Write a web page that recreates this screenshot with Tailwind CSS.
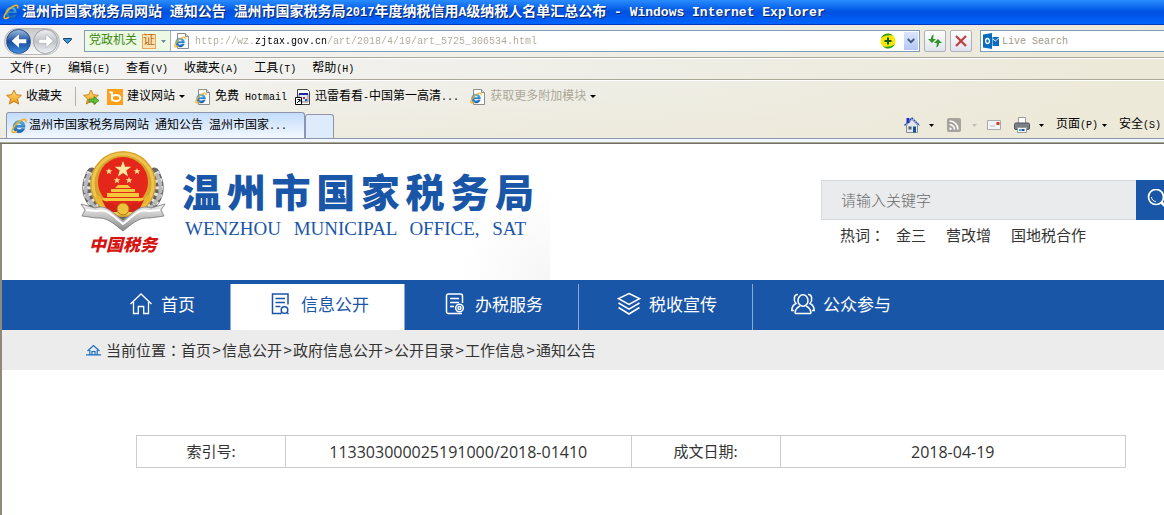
<!DOCTYPE html>
<html lang="zh-CN">
<head>
<meta charset="utf-8">
<title>温州市国家税务局网站</title>
<script src="https://cdn.jsdelivr.net/npm/@tailwindcss/browser@4"></script>
</head>
<body class="min-h-screen overflow-x-hidden bg-white font-['Noto_Sans_CJK_SC',sans-serif] text-[15px] text-[#333]">
<svg class="absolute size-0" aria-hidden="true">
  <defs>
    <linearGradient id="ieBlue" x1="0" y1="0" x2="0" y2="1"><stop offset="0" stop-color="#4fbcf0"/><stop offset="1" stop-color="#1160b8"/></linearGradient>
    <linearGradient id="gold" x1="0" y1="0" x2="0" y2="1"><stop offset="0" stop-color="#ffe680"/><stop offset="1" stop-color="#f0930c"/></linearGradient>
    <linearGradient id="silver" x1="0" y1="0" x2="0" y2="1"><stop offset="0" stop-color="#f2f2f2"/><stop offset="1" stop-color="#8b8b8b"/></linearGradient>
    <symbol id="ie" viewBox="0 0 16 16">
      <path d="M14 9.300H5.400c.2 1.600 1.300 2.500 2.900 2.500 1.100 0 1.900-.4 2.400-1.200h3c-.7 2.700-2.800 4.200-5.600 4.200-3.600 0-5.900-2.400-5.900-6 0-3.500 2.400-6.100 5.900-6.100 3.800 0 6 2.700 5.900 6.600zM5.500 7.200h5.200C10.500 5.800 9.600 5 8.200 5 6.700 5 5.800 5.800 5.500 7.200z" fill="url(#ieBlue)" stroke="#0d4f9c" stroke-width=".4"/>
      <path d="M14.600 4.500c.8-2.600-.4-3.700-2.600-2.900C8.500 2.900 3.700 7 1.900 10.500.6 13 .9 14.900 2.900 14.500c.9-.2 2-.7 3-1.400" fill="none" stroke="#f5b120" stroke-width="1.600"/>
    </symbol>
    <symbol id="iepage" viewBox="0 0 16 16">
      <path d="M3.500.5h8l3 3v12h-11z" fill="#fff" stroke="#8d8d8d"/><path d="M11.500.5v3h3" fill="#ddd" stroke="#8d8d8d"/>
      <use href="#ie" x="0" y="3" width="12" height="12"/>
    </symbol>
    <symbol id="star" viewBox="0 0 16 16"><path d="M8 1l2.200 4.700 5.200.6-3.900 3.500 1.100 5.200L8 12.400 3.400 15l1.100-5.200L.6 6.300l5.200-.6z" fill="url(#gold)" stroke="#c47a12" stroke-width=".9"/></symbol>
  </defs>
</svg>

<header class="font-['Liberation_Mono','Noto_Sans_CJK_SC',monospace] text-xs text-black">
  <!-- Title bar -->
  <div class="flex h-[25px] items-center gap-[3px] overflow-hidden whitespace-nowrap bg-linear-to-b from-[#2a8cff] via-[#0050e0] to-[#0066ff] pl-[3px] border-b border-[#0038c0]">
    <svg class="size-4 shrink-0"><use href="#ie"/></svg>
    <h1 class="text-sm font-bold text-white [text-shadow:1px_1px_0_#0a246a]">温州市国家税务局网站<span class="text-[13px]"> </span>通知公告<span class="text-[13px]"> </span>温州市国家税务局<span class="text-xs">2017</span>年度纳税信用<span class="text-[13px]">A</span>级纳税人名单汇总公布<span class="text-[13px]"> - Windows Internet Explorer</span></h1>
  </div>

  <div class="bg-linear-to-r from-[#f4f4f4] via-[#efeee7] to-[#ece9d8]">
    <!-- Address row -->
    <div class="flex h-[33px] items-center border-b border-[#aca899]">
      <div class="ml-1 flex h-[27px] w-14 shrink-0 items-center justify-between rounded-full border border-[#b8b8b8] bg-linear-to-b from-[#c8c8c8] to-[#f8f8f8] px-px">
        <button aria-label="后退" class="grid size-[25px] place-items-center rounded-full border border-[#28508c] bg-linear-to-b from-[#9ab8dc] via-[#1c4c9c] to-[#3f8fe0]"><svg class="size-[18px]" viewBox="0 0 16 16"><path d="M8 2L1.500 8 8 14v-4h6.500V6.500H8z" fill="#fff"/></svg></button>
        <button aria-label="前进" class="grid size-[25px] place-items-center rounded-full border border-[#a0a4aa] bg-linear-to-b from-[#eceef0] via-[#bfc3c8] to-[#f0f2f4]"><svg class="size-[18px]" viewBox="0 0 16 16"><path d="M8 2l6.500 6L8 14v-4H1.500V6.500H8z" fill="#fff" stroke="#a4a8ac" stroke-width=".5"/></svg></button>
      </div>
      <button aria-label="最近的页面" class="ml-[3px] shrink-0"><svg class="h-[6px] w-[9px]" viewBox="0 0 9 6"><path d="M.5.5h8v1L4.500 5.500.5 1.500z" fill="#3f98c4" stroke="#173f74"/></svg></button>
      <div class="ml-3 flex h-[22px] min-w-0 flex-1 items-center border border-[#7f9db9] bg-white">
        <button class="flex h-full shrink-0 items-center gap-[5px] border-r border-[#9fb0c4] bg-[#eef9e4] pl-1 pr-1 text-[#3a8a12]">党政机关<span class="border border-[#eda653] bg-[#fbe3b8] text-xs leading-[13px] text-[#b86a10]">证</span><svg class="h-[3px] w-[5px]" viewBox="0 0 5 3"><path d="M0 0h5L2.500 3z" fill="#6b8799"/></svg></button>
        <svg class="mr-[5px] ml-[3px] size-4 shrink-0"><use href="#iepage"/></svg>
        <input aria-label="地址" class="h-5 min-w-0 flex-1 bg-[linear-gradient(90deg,#aca899_0_60px,#000_60px_132px,#aca899_132px)] bg-clip-text text-[10px] text-transparent outline-none" value="http://wz.zjtax.gov.cn/art/2018/4/19/art_5725_306534.html">
        <button aria-label="兼容性检查" class="shrink-0"><svg class="size-4" viewBox="0 0 16 16"><circle cx="8" cy="8" r="7.500" fill="#f8e800"/><path d="M1 5a7.500 7.500 0 0 1 12-2.500C9 2 5 2 1 5zM15 11A7.500 7.500 0 0 1 3 13.500C7 14 11 14 15 11z" fill="#2c9c1c"/><path d="M8 4.500v7M4.500 8h7" stroke="#0b5a18" stroke-width="2"/></svg></button>
        <button aria-label="地址列表" class="mr-px ml-2 grid h-[18px] w-[14px] shrink-0 place-items-center bg-linear-to-b from-[#dce6fc] to-[#b4c8f4]"><svg class="h-[6px] w-2" viewBox="0 0 8 6"><path d="M.8 1L4 4.200 7.200 1" fill="none" stroke="#44547a" stroke-width="1.800"/></svg></button>
      </div>
      <button aria-label="刷新" class="ml-1 grid size-[22px] shrink-0 place-items-center rounded-[2px] border border-[#aeb2b8] bg-linear-to-b from-white to-[#dfe3ee]"><svg class="size-4" viewBox="0 0 16 16"><path d="M7 1.500C4.500 2 4 4 4 6H1l4 4 4-4H6.200c0-2 .1-3 .8-4.500zM9 14.500c2.500-.5 3-2.500 3-4.500h3l-4-4-4 4h2.800c0 2-.1 3-.8 4.500z" fill="#2f9426"/></svg></button>
      <button aria-label="停止" class="ml-1 grid size-[22px] shrink-0 place-items-center rounded-[2px] border border-[#aeb2b8] bg-linear-to-b from-white to-[#dfe3ee]"><svg class="size-4" viewBox="0 0 16 16"><path d="M3 3l10 10M13 3L3 13" stroke="#bf3f3c" stroke-width="2.200"/></svg></button>
      <div class="ml-2 flex h-[22px] w-[184px] shrink-0 items-center border border-r-0 border-[#7f9db9] bg-white pl-[2px]">
        <svg class="size-4 shrink-0" viewBox="0 0 16 16"><path d="M0 1.500L9 0v16L0 14.500zM9.500 4H16v9H9.500z" fill="#0a6cbd"/><ellipse cx="4.500" cy="8" rx="1.900" ry="2.500" fill="none" stroke="#fff" stroke-width="1.300"/><path d="M10 6l2.300 2L16 4.800" fill="none" stroke="#fff"/></svg>
        <input aria-label="搜索" placeholder="Live Search" class="ml-[3px] h-5 w-36 bg-transparent text-[10px] outline-none placeholder:text-[#9d9a8d]">
      </div>
    </div>
    <!-- Menu bar -->
    <nav class="flex h-[22px] items-center gap-4 whitespace-nowrap border-t border-t-white border-b border-b-[#aca899] pl-[10px] leading-5">
      <button>文件<span class="text-[10px]">(F)</span></button>
      <button>编辑<span class="text-[10px]">(E)</span></button>
      <button>查看<span class="text-[10px]">(V)</span></button>
      <button>收藏夹<span class="text-[10px]">(A)</span></button>
      <button>工具<span class="text-[10px]">(T)</span></button>
      <button>帮助<span class="text-[10px]">(H)</span></button>
    </nav>
    <div class="bg-linear-to-b from-transparent to-[#ece9d8]/70">
    <!-- Favorites bar -->
    <div class="flex h-8 items-center whitespace-nowrap border-t border-white pl-[6px]">
      <button class="flex items-center gap-1"><svg class="size-4"><use href="#star"/></svg>收藏夹</button>
      <span class="mr-[7px] ml-[13px] h-[19px] w-px bg-[#b5b2a4]"></span>
      <button aria-label="添加到收藏夹栏"><svg class="block size-4" viewBox="0 0 16 16"><use href="#star"/><path d="M6 10h5V7.500l5 4-5 4V13H6z" fill="#5cc43c" stroke="#2a7c1c" stroke-width=".7"/></svg></button>
      <button class="ml-2 flex items-center gap-1"><svg class="size-4" viewBox="0 0 16 16"><path d="M0 0h16v16H0z" fill="#ffa01c"/><path d="M2.500 3l2.500.8v7.700" fill="none" stroke="#fff" stroke-width="2"/><ellipse cx="9" cy="9" rx="4.300" ry="3" fill="none" stroke="#fff" stroke-width="2"/></svg>建议网站<svg class="h-[3px] w-[6px]" viewBox="0 0 6 3"><path d="M0 0h6L3 3z"/></svg></button>
      <button class="ml-[10px] flex items-center gap-1"><svg class="size-4"><use href="#iepage"/></svg><span>免费<span class="text-[10px]"> Hotmail</span></span></button>
      <button class="ml-2 flex items-center gap-1"><svg class="size-4" viewBox="0 0 16 16"><path d="M2.500.5h10l2 2v13h-12z" fill="#fff" stroke="#444"/><path d="M4 5h9v8H4z" fill="#dfe8ff" stroke="#666" stroke-width=".8"/><path d="M4 4h9v2H4z" fill="#1b2b9c"/><path d="M8 8h2v2H8z" fill="#e22"/><path d="M10 10h2v2h-2z" fill="#1a58d8"/><path d="M.5 8.500h6v7h-6z" fill="#fff" stroke="#000"/><path d="M2 14l3-3M2.500 10.500H5V13" fill="none" stroke="#000"/></svg><span>迅雷看看<span class="text-[10px]">-</span>中国第一高清<span class="text-[10px]">...</span></span></button>
      <button class="ml-[11px] flex items-center gap-1 text-[#aca899]"><svg class="size-4"><use href="#iepage"/></svg>获取更多附加模块<svg class="h-[3px] w-[6px]" viewBox="0 0 6 3"><path d="M0 0h6L3 3z" fill="#000"/></svg></button>
    </div>
    <!-- Tabs and command bar -->
    <div class="flex h-[27px] items-end border-b border-[#8c95ab] whitespace-nowrap">
      <button class="ml-[6px] flex h-[26px] w-[299px] shrink-0 items-center gap-[2px] rounded-t-[3px] border border-b-0 border-[#8c95ab] bg-linear-to-b from-[#c3dcfa] to-[#f3f8ff] pl-1"><svg class="size-4"><use href="#ie"/></svg><span>温州市国家税务局网站<span class="text-[10px]"> </span>通知公告<span class="text-[10px]"> </span>温州市国家<span class="text-[10px]">...</span></span></button>
      <button aria-label="新选项卡" class="h-[24px] w-[29px] shrink-0 rounded-t-[3px] border border-b-0 border-[#8c95ab] bg-[#deebfa]"></button>
      <div class="ml-auto flex h-[26px] w-[260px] shrink-0 items-center overflow-hidden">
        <button aria-label="主页" class="flex shrink-0 items-center gap-[9px]"><svg class="size-4" viewBox="0 0 16 16"><path d="M2.500 8v7.500h11V8L8 2.500z" fill="#e4e7ee" stroke="#8a8f99"/><path d="M2.500 1h3v5h-3z" fill="#1c2fc4"/><path d="M.5 8.500L8 1l7.500 7.500" fill="none" stroke="#2b50c8" stroke-width="1.400" stroke-dasharray="2 .6"/><path d="M9 9.500h3v6H9z" fill="#1c4f9c"/><path d="M4.500 9.500h3v3h-3z" fill="#555e70"/></svg><svg class="h-[3px] w-[5px]" viewBox="0 0 5 3"><path d="M0 0h5L2.500 3z"/></svg></button>
        <button aria-label="源" class="ml-3 flex shrink-0 items-center gap-[10px]"><svg class="size-4" viewBox="0 0 16 16"><rect x="1" y="1" width="14" height="14" rx="2" fill="#a5a39b"/><path d="M3.500 7.500a5 5 0 0 1 5 5M3.500 4a8.500 8.500 0 0 1 8.500 8.500" fill="none" stroke="#fff" stroke-width="1.600"/><circle cx="4.500" cy="11.700" r="1.200" fill="#fff"/></svg><svg class="h-[3px] w-[5px]" viewBox="0 0 5 3"><path d="M0 0h5L2.500 3z" fill="#c2bfb2"/></svg></button>
        <button aria-label="阅读邮件" class="ml-[9px] shrink-0"><svg class="block size-4" viewBox="0 0 16 16"><path d="M1.500 3.500h13v9h-13z" fill="#f4f4f4" stroke="#aaa"/><path d="M10.500 5h3v3h-3z" fill="#cf3a36"/><path d="M4 9h5" stroke="#bbb"/></svg></button>
        <button aria-label="打印" class="ml-3 flex shrink-0 items-center gap-[9px]"><svg class="size-4" viewBox="0 0 16 16"><path d="M4.500.5h7v6h-7z" fill="#fff" stroke="#999"/><rect x=".5" y="6" width="15" height="6.500" rx="1.500" fill="#7b7f86" stroke="#50545a"/><path d="M3.500 10.500h9v5h-9z" fill="#f4f6fa" stroke="#999"/><path d="M5 12h2v2H5z" fill="#28b4d4"/><path d="M7.500 12h3v2h-3z" fill="#2b4f9c"/></svg><svg class="h-[3px] w-[5px]" viewBox="0 0 5 3"><path d="M0 0h5L2.500 3z"/></svg></button>
        <button class="ml-3 flex shrink-0 items-center gap-1"><span>页面<span class="text-[10px]">(P)</span></span><svg class="h-[3px] w-[5px]" viewBox="0 0 5 3"><path d="M0 0h5L2.500 3z"/></svg></button>
        <button class="ml-3 shrink-0">安全<span class="text-[10px]">(S)</span></button>
      </div>
    </div>
    </div>
    <div class="h-[5px] border-b border-[#716f64] bg-[#f1f5fd] pt-[3px]"><div class="h-px bg-[#aca899]"></div></div>
  </div>
</header>

<div class="border-l-2 border-[#8d8a7c]">
  <!-- Masthead -->
  <div class="flex h-[136px] items-start overflow-hidden">
    <a href="#" class="flex h-full w-[548px] shrink-0 items-start bg-[radial-gradient(circle_at_100%_100%,#f6f6f6,#fff_90px)] pl-[78px]">
      <span class="flex w-[86px] flex-col items-center pt-[6px]">
        <svg class="h-[82px] w-[86px]" viewBox="0 0 86 82" aria-hidden="true">
          <g fill="none" stroke-linecap="round">
            <path d="M12 23C2 42 10 58 38 68M74 23c10 19 2 35-26 45" stroke="#666" stroke-width="11"/>
            <path d="M12 23C2 42 10 58 38 68M74 23c10 19 2 35-26 45" stroke="#e4e4e4" stroke-width="10" stroke-dasharray="3 4" stroke-linecap="butt"/>
            <path d="M9 25C0 43 8 57 35 68M77 25c9 18 1 32-25 43" stroke="#b9b9b9" stroke-width="4" stroke-dasharray="3 4"/>
          </g>
          <circle cx="43" cy="34" r="33" fill="#d9a32c"/>
          <circle cx="43" cy="34" r="30" fill="none" stroke="#ecc64e" stroke-width="3"/>
          <circle cx="43" cy="32" r="25" fill="#e5261a"/>
          <path d="M43 11l2.100 5.800h6.100l-4.900 3.700 1.800 6-5.100-3.600-5.100 3.600 1.800-6-4.900-3.700h6.100z" fill="#fbe9a0"/>
          <path id="smallStar" d="M29 18l.9 2.300h2.500l-2 1.500.8 2.400-2.200-1.500-2.200 1.500.8-2.400-2-1.500h2.500z" fill="#fbe08c"/>
          <use href="#smallStar" x="28"/><use href="#smallStar" x="8" y="9"/><use href="#smallStar" x="20" y="9"/>
          <path d="M35 38l3-3h10l3 3zM31 39h24v3H31zM27 43h32v4H27zM23 48h40v3H23z" fill="#f3c83c"/>
          <path d="M17 46c4 8 12 11 20 11M69 46c-4 8-12 11-20 11" fill="none" stroke="#e9b32e" stroke-width="4"/>
          <path d="M22 50l6 12h9l3-6zM64 50l-6 12h-9l-3-6z" fill="#d62015"/>
          <circle cx="43" cy="59" r="6" fill="#edc23c" stroke="#b07410"/>
          <path d="M1 54l14 4c12-4 17 5 28 12 11-7 16-16 28-12l14-4-4 6 3 6-14 2c-11-1-17 5-27 13-10-8-16-14-27-13L2 66l3-6z" fill="url(#silver)" stroke="#777" stroke-width=".8"/>
          <path d="M6 60l10 1c12-3 16 5 27 13 11-8 15-16 27-13l10-1" fill="none" stroke="#fff" stroke-width="2"/>
        </svg>
        <span class="text-[17px] font-black italic leading-6 text-[#d41512]">中国税务</span>
      </span>
      <span class="ml-4 flex w-[352px] flex-col pt-6 text-[#1a56a8]">
        <span class="text-[39px] font-black leading-11 [text-align-last:justify]">温州市国家税务局</span>
        <span class="mr-2 ml-[3px] mt-[5px] whitespace-nowrap font-['Liberation_Serif',serif] text-[19px] leading-6 [text-align-last:justify]">WENZHOU MUNICIPAL OFFICE, SAT</span>
      </span>
    </a>
    <div class="ml-auto w-[343px] shrink-0 pt-9">
      <form class="flex h-10">
        <input aria-label="请输入关键字" placeholder="请输入关键字" class="min-w-0 flex-1 border border-r-0 border-[#d9dadb] bg-[#e9ebed] pl-[19px] font-light outline-none placeholder:text-[#6a6a6a]">
        <button type="button" aria-label="搜索" class="w-7 shrink-0 overflow-hidden bg-[#1a56a8] pl-[11px]"><svg class="block h-[22px] w-[22px]" viewBox="0 0 22 22" fill="none" stroke="#fff"><circle cx="9" cy="8" r="7.500" stroke-width="1.700"/><path d="M4.500 8A4.500 4.500 0 0 0 9 12.500"/><path d="M14.500 13.500l6 6" stroke-width="3"/></svg></button>
      </form>
      <div class="flex pl-[19px] leading-[30px]"><span>热词<span class="font-['Noto_Sans_CJK_TC']" lang="zh-TW">：</span></span><a href="#" class="ml-[11px]">金三</a><a href="#" class="ml-5">营改增</a><a href="#" class="ml-5">国地税合作</a></div>
    </div>
  </div>

  <!-- Main navigation -->
  <nav class="flex h-[50px] items-stretch bg-[#1a56a8] pl-[54px] pt-1 text-[17px] text-white">
    <a href="#" class="flex w-[174px] items-start justify-center gap-2 pt-2 pl-[38px] leading-6"><svg class="size-6" viewBox="0 0 24 24" fill="none" stroke="currentColor" stroke-width="1.300"><path d="M1.500 12L12 2l10.500 10M4.500 10v11.500h4.800v-7h5.400v7h4.800V10"/></svg>首页</a>
    <a href="#" class="flex w-[175px] items-start justify-center gap-2 border-x border-[#8ba9d2] bg-white pt-2 pl-[3px] leading-6 text-[#1a56a8]"><svg class="size-6" viewBox="0 0 24 24" fill="none" stroke="currentColor" stroke-width="1.500"><path d="M19 12.500V2H3.500v19.500H12M6.500 6.500H16M6.500 10.500H16M6.500 14.500h5"/><circle cx="15.500" cy="18" r="3.300"/><path d="M13 20.500l-2 1.500M18 20.500l1.500 1.500"/></svg>信息公开</a>
    <a href="#" class="flex w-[174px] items-start justify-center gap-2 border-r border-[#8ba9d2] pt-2 pl-[3px] leading-6"><svg class="size-6" viewBox="0 0 24 24" fill="none" stroke="currentColor" stroke-width="1.500"><path d="M19.500 11V4a2 2 0 0 0-2-2h-12a2 2 0 0 0-2 2v15.500a2 2 0 0 0 2 2H19M7 6.500h9M7 10.500h9M7 14.500h4"/><circle cx="16.500" cy="16" r="3.800"/><circle cx="16.500" cy="16" r="1.500"/></svg>办税服务</a>
    <a href="#" class="flex w-[174px] items-start justify-center gap-2 border-r border-[#8ba9d2] pt-2 pl-[3px] leading-6"><svg class="size-6" viewBox="0 0 24 24" fill="none" stroke="currentColor" stroke-width="1.500"><path d="M12 1.500l10.500 5.200L12 12.500 1.500 6.700zM1.500 11L12 17.200 22.500 11M1.500 15.500L12 22l10.500-6.500"/></svg>税收宣传</a>
    <a href="#" class="flex w-[174px] items-start justify-center gap-2 pt-2 pl-[2px] leading-6"><svg class="size-6" viewBox="0 0 24 24" fill="none" stroke="currentColor" stroke-width="1.500"><ellipse cx="12" cy="8.500" rx="5" ry="5.800"/><path d="M4 21.500c0-4 2-6 5-7.500M20 21.500c0-4-2-6-5-7.500M4 21.500h16M7 2.500C3 2 2 8 5 11.500c-3 1.500-4.200 3.500-4.200 7H3M17 2.500c4-.5 5 5.500 2 9 3 1.500 4.200 3.500 4.200 7H21"/></svg>公众参与</a>
  </nav>

  <!-- Breadcrumb -->
  <div class="flex h-10 items-center bg-[#ececec] pl-[84px]">
    <svg class="mr-[5px] h-3 w-[15px]" viewBox="0 0 15 12" fill="none" stroke="#1a6fc4" stroke-width="1.200"><path d="M1.500 7l6-5.500 6 5.500M0 10.800h15M3.800 6v4.500M11.200 6v4.500M6 10.500V7.500h3v3"/></svg>
    <span>当前位置<span class="font-['Noto_Sans_CJK_TC']" lang="zh-TW">：</span></span><a href="#">首页</a><span class="w-[11px] text-center">&gt;</span><a href="#">信息公开</a><span class="w-[11px] text-center">&gt;</span><a href="#">政府信息公开</a><span class="w-[11px] text-center">&gt;</span><a href="#">公开目录</a><span class="w-[11px] text-center">&gt;</span><a href="#">工作信息</a><span class="w-[11px] text-center">&gt;</span><a href="#">通知公告</a>
  </div>

  <!-- Document details -->
  <main class="pt-[65px] pr-[38px] pl-[134px] pb-12">
    <table class="w-full table-fixed border-collapse text-center">
      <colgroup><col class="w-[149px]"><col><col class="w-[149px]"><col></colgroup>
      <tr class="h-8">
        <th scope="row" class="border border-[#ccc] p-0 font-normal">索引号:</th>
        <td class="border border-[#ccc] p-0 font-['Open_Sans',sans-serif] text-base">113303000025191000/2018-01410</td>
        <th scope="row" class="border border-[#ccc] p-0 font-normal">成文日期:</th>
        <td class="border border-[#ccc] p-0 font-['Open_Sans',sans-serif] text-base">2018-04-19</td>
      </tr>
    </table>
  </main>
</div>
</body>
</html>
